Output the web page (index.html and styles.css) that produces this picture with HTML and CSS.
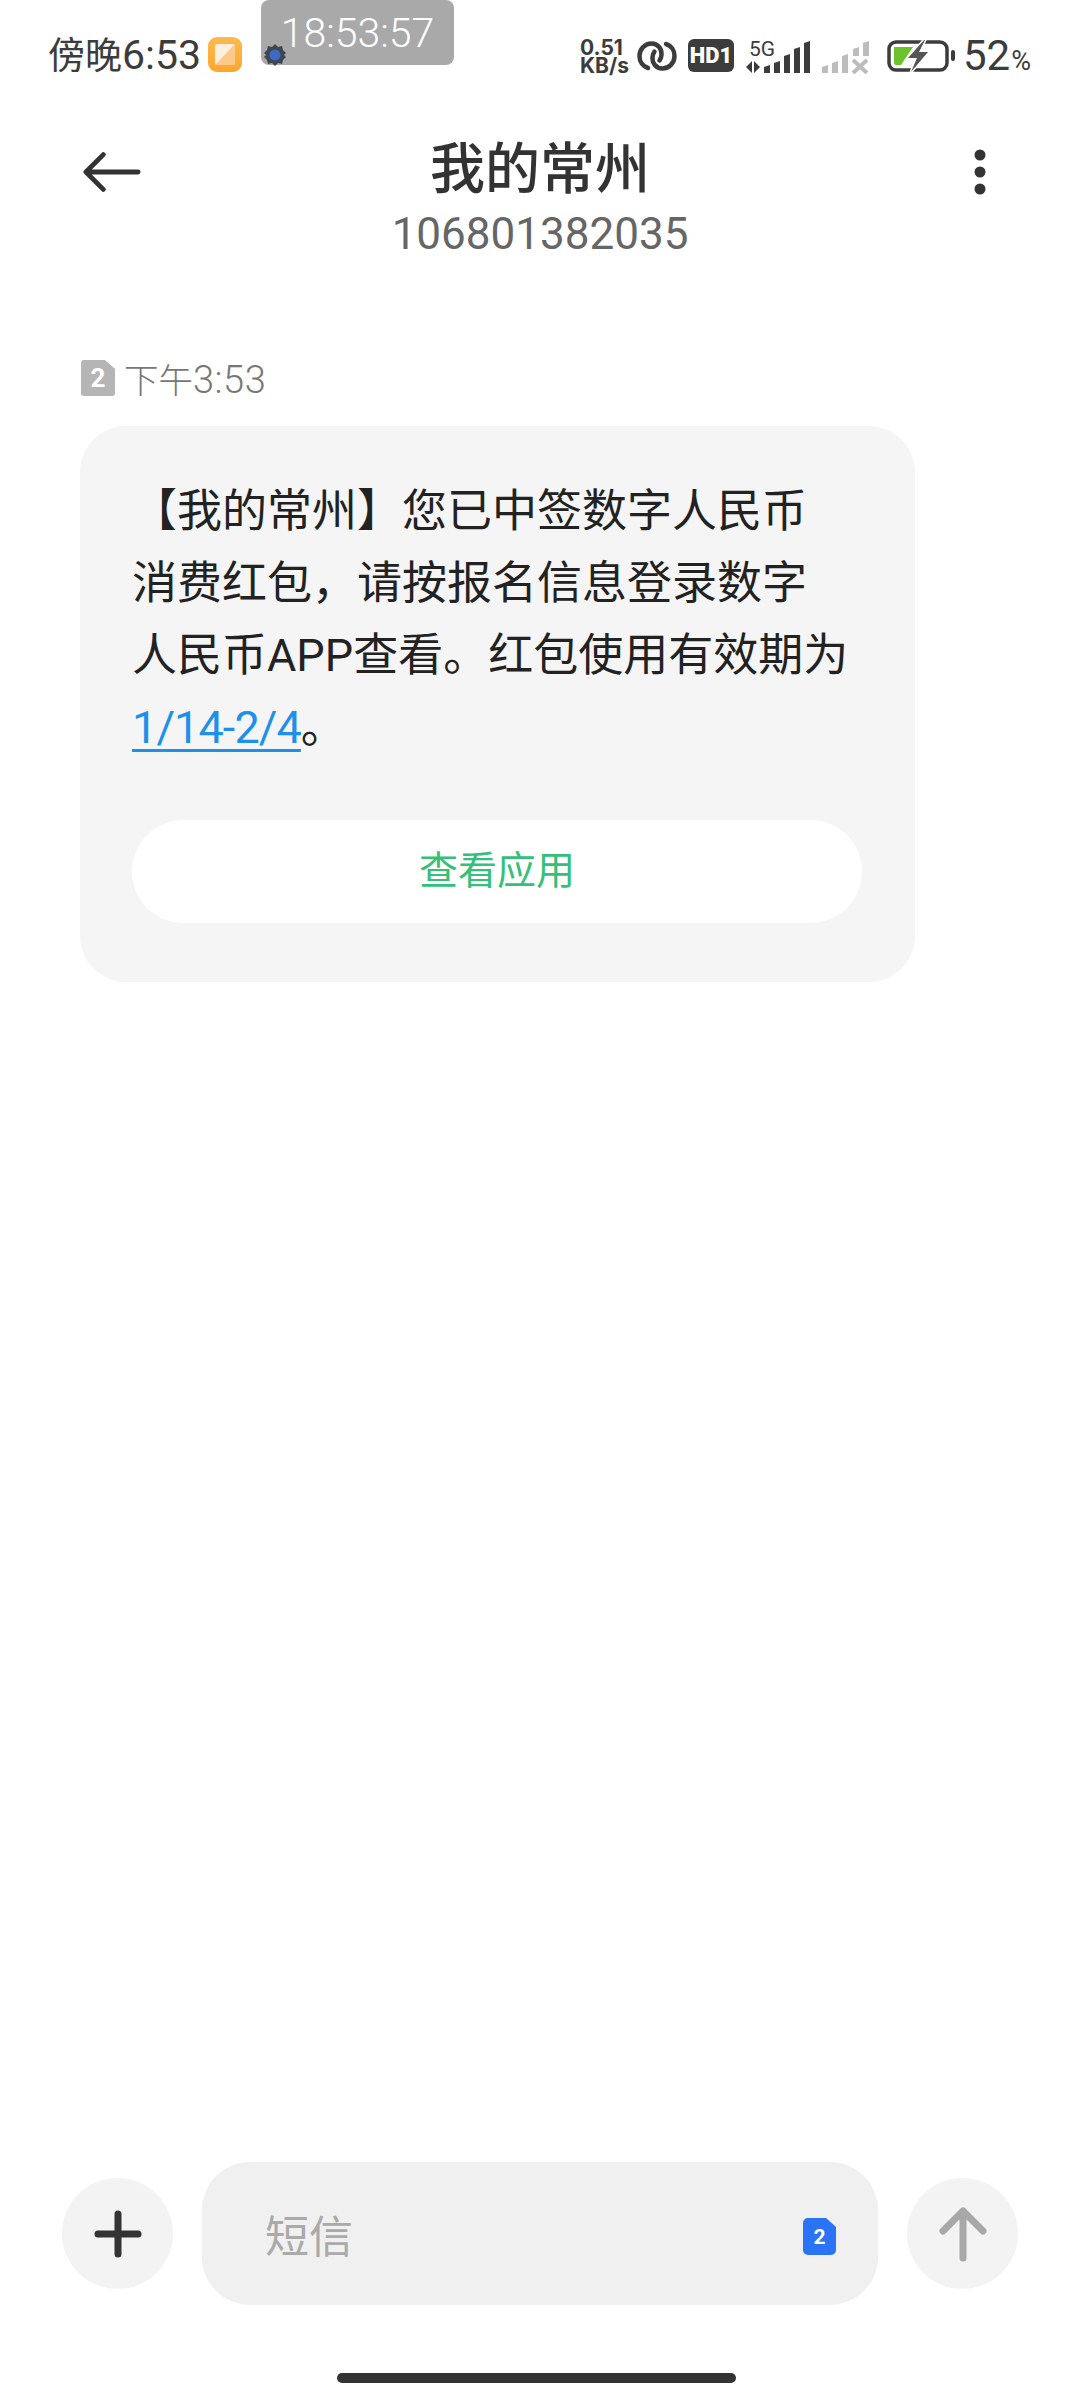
FILE: index.html
```html
<!DOCTYPE html>
<html lang="zh-CN">
<head>
<meta charset="utf-8">
<title>我的常州</title>
<link rel="stylesheet" href="styles.css">
</head>
<body>
<div class="screen">
  <header class="status">
    <span class="clock">傍晚<span class="clock-digits">6:53</span></span>
    <svg class="note-icon" viewBox="0 0 34 35"><defs><linearGradient id="og" x1="0" y1="0" x2="0" y2="1"><stop offset="0" stop-color="#fdba50"/><stop offset="1" stop-color="#fda62e"/></linearGradient></defs><rect width="34" height="35" rx="9" fill="url(#og)"/><rect x="7" y="7" width="20" height="21" rx="2" fill="#fdeedd"/><path d="M7 28 27 7v19a2 2 0 0 1-2 2z" fill="#fdc98a"/></svg>
    <span class="speed">0.51<br>KB/s</span>
    <svg class="link-icon" viewBox="0 0 40 30" fill="none" stroke="#3c3c3c" stroke-width="4.500" stroke-linecap="round"><path d="M11 27C6 25.500 2.500 21 2.500 15 2.500 8 8 2.500 14.500 2.500 21 2.500 25 8 24.500 14c-.2 2-1 4-2 5.500"/><path d="M11 27C6 25.500 2.500 21 2.500 15 2.500 8 8 2.500 14.500 2.500 21 2.500 25 8 24.500 14c-.2 2-1 4-2 5.500" transform="rotate(180 20 15)"/></svg>
    <span class="hd">HD1</span>
    <svg class="signal" viewBox="0 0 68 34"><text x="3" y="16" class="sig-label">5G</text><path d="M6 21v12l-6-6zM8 33V21l6 6z" fill="#3c3c3c"/><g fill="#3c3c3c"><path d="M18 27l6-2v8h-6z"/><path d="M28 23l6-2v12h-6z"/><path d="M38 16l6-2v19h-6z"/><path d="M48 9l6-2v26h-6z"/><path d="M58 3l6-2v32h-6z"/></g></svg>
    <svg class="signal-off" viewBox="0 0 48 34"><g fill="#bcbcbc"><path d="M1 27l6-2v8H1z"/><path d="M11 23l6-2v12h-6z"/><path d="M21 16l6-2v19h-6z"/><path d="M32 9l6-2v9h-6z"/><path d="M42 3l6-2v15h-6z"/></g><path d="M32 20l14 13M46 20 32 33" stroke="#bcbcbc" stroke-width="4" fill="none"/></svg>
    <svg class="battery" viewBox="0 0 68 32"><rect x="2" y="2" width="58" height="28" rx="7" fill="none" stroke="#3c3c3c" stroke-width="3.500"/><path d="M7 7h19L14 25H9a2 2 0 0 1-2-2z" fill="#6cc32e"/><path d="M37 0 21 18h9l-6 14 17-20h-9l6-12z" fill="#555" stroke="#fff" stroke-width="3" paint-order="stroke"/><rect x="64" y="10" width="4" height="11" rx="2" fill="#3c3c3c"/></svg>
    <span class="level">52<small>%</small></span>
    <span class="chip">18:53:57</span>
    <svg class="gear" viewBox="0 0 24 24"><path d="M12 1l3 3 4-1 1 4 3 3-2 2 2 2-3 3-1 4-4-1-3 3-3-3-4 1-1-4-3-3 2-2-2-2 3-3 1-4 4 1z" fill="#3e4650"/><circle cx="12" cy="12" r="5.500" fill="#3f69c4"/></svg>
  </header>

  <nav class="title-bar">
    <svg class="nav-icon back" viewBox="0 0 60 40" fill="none" stroke="#333" stroke-width="5" stroke-linecap="round" stroke-linejoin="round"><path d="M57 20H4M21 2 3 20l18 18"/></svg>
    <div class="title-text">
      <h1>我的常州</h1>
      <p>106801382035</p>
    </div>
    <svg class="nav-icon more" viewBox="0 0 12 46" fill="#333"><circle cx="6" cy="6" r="5.500"/><circle cx="6" cy="23" r="5.500"/><circle cx="6" cy="40" r="5.500"/></svg>
  </nav>

  <main class="thread">
    <div class="stamp">
      <span class="sim sim-grey">2</span>
      <span>下午<span class="stamp-digits">3:53</span></span>
    </div>
    <article class="bubble">
      <p class="msg">【我的常州】您已中签数字人民币<br>消费红包，请按报名信息登录数字<br>人民币APP查看。红包使用有效期为<br><a class="date-link">1/14-2/4</a>。</p>
      <div class="action">查看应用</div>
    </article>
  </main>

  <footer class="composer">
    <div class="round-btn">
      <svg class="plus" viewBox="0 0 48 48" fill="none" stroke="#333" stroke-width="7" stroke-linecap="round"><path d="M24 4v40M4 24h40"/></svg>
    </div>
    <div class="input">
      <span class="placeholder">短信</span>
      <span class="sim sim-blue">2</span>
    </div>
    <div class="round-btn">
      <svg class="send" viewBox="0 0 48 56" fill="none" stroke="#a8a8a8" stroke-width="7" stroke-linecap="round" stroke-linejoin="round"><path d="M24 52V5M4 25 24 5l20 20"/></svg>
    </div>
  </footer>
  <div class="home-bar"></div>
</div>
</body>
</html>
```

FILE: styles.css
```css
* { box-sizing: border-box; margin: 0; padding: 0; }
html, body { background: #fff; }
body { font-family: Roboto, "Noto Sans CJK SC", sans-serif; }
.screen { width: 1080px; height: 2400px; display: flex; flex-direction: column; position: relative; overflow: hidden; }

.status { height: 110px; padding: 37px 0 0 48px; display: flex; align-items: flex-start; color: #3c3c3c; }
.clock { font-size: 37px; line-height: 36px; width: 152px; margin-right: 8px; white-space: nowrap; }
.clock-digits { font-size: 41px; }
.note-icon { width: 34px; height: 35px; margin-right: 338px; flex: none; }
.speed { font-size: 21px; line-height: 18px; font-weight: 700; width: 50px; margin: 2px 7px 0 0; white-space: nowrap; font-family: Inter, Roboto, sans-serif; }
.link-icon { width: 40px; height: 30px; margin: 4px 11px 0 0; flex: none; }
.hd { width: 46px; height: 33px; margin: 2px 12px 0 0; border-radius: 6px; background: #3c3c3c; color: #fff; font-size: 22px; font-weight: 900; line-height: 33px; text-align: center; flex: none; }
.signal { width: 68px; height: 34px; margin: 3px 7px 0 0; flex: none; }
.sig-label { font-family: Roboto, sans-serif; font-size: 21px; fill: #3c3c3c; }
.signal-off { width: 48px; height: 34px; margin: 3px 18px 0 0; flex: none; }
.battery { width: 68px; height: 32px; margin: 3px 8px 0 0; flex: none; }
.level { font-size: 42px; font-weight: 400; line-height: 36px; margin-top: 1px; white-space: nowrap; }
.level small { font-size: 27px; font-weight: 400; margin-left: 1px; }

.chip { position: absolute; left: 261px; top: 0; width: 193px; height: 65px; border-radius: 8px; background: #a9a9a9; color: #fff; font-size: 41px; font-weight: 300; line-height: 66px; text-align: center; }
.gear { position: absolute; left: 263px; top: 43px; width: 24px; height: 24px; }

.title-bar { height: 150px; display: flex; justify-content: space-between; align-items: flex-start; padding: 0 94px 0 83px; position: relative; }
.nav-icon { flex: none; }
.back { width: 58px; height: 40px; margin-top: 42px; }
.more { width: 12px; height: 46px; margin-top: 39px; }
.title-text { position: absolute; left: 0; right: 0; top: 23px; text-align: center; }
.title-text h1 { font-size: 55px; font-weight: 500; line-height: 72px; color: #333; }
.title-text p { font-size: 44px; line-height: 44px; color: #666; margin-top: 7px; }

.thread { flex: 1; padding: 99px 0 0 80px; }
.stamp { display: flex; align-items: center; gap: 9px; height: 38px; font-size: 34.500px; font-weight: 300; color: #777; }
.stamp-digits { font-size: 38px; letter-spacing: 0.500px; }
.sim { display: flex; align-items: center; justify-content: center; flex: none; color: #fff; font-weight: 700; clip-path: polygon(0 0, 70% 0, 100% 24%, 100% 100%, 0 100%); }
.sim-grey { width: 34px; height: 36px; margin-left: 1px; background: #b5b5b5; border-radius: 3px; font-size: 26px; }
.bubble { width: 835px; height: 556px; margin-top: 29px; padding: 50px 53px 0 52px; background: #f5f5f5; border-radius: 46px; }
.msg { font-size: 45px; line-height: 72px; color: #222; white-space: nowrap; }
.date-link { color: #1e90ea; text-decoration: underline; text-underline-offset: 6px; text-decoration-thickness: 3px; letter-spacing: -0.900px; }
.action { height: 103px; margin-top: 56px; border-radius: 52px; background: #fff; color: #35bf78; font-size: 39px; line-height: 103px; text-align: center; }

.composer { display: flex; align-items: center; padding: 0 62px; gap: 29px; height: 143px; margin-bottom: 95px; }
.round-btn { width: 111px; height: 111px; border-radius: 50%; background: #f3f3f3; display: flex; align-items: center; justify-content: center; flex: none; }
.plus { width: 48px; height: 48px; }
.send { width: 48px; height: 56px; }
.input { flex: 1; height: 143px; border-radius: 48px; background: #f0f0f0; padding: 0 42px 0 63px; display: flex; align-items: center; justify-content: space-between; }
.placeholder { font-size: 44px; color: #aaa; }
.sim-blue { width: 33px; height: 37px; background: #2a73f5; border-radius: 5px; font-size: 21px; margin-top: 6px; }
.home-bar { position: absolute; left: 337px; top: 2373px; width: 399px; height: 10px; border-radius: 5px; background: #333; }
```
